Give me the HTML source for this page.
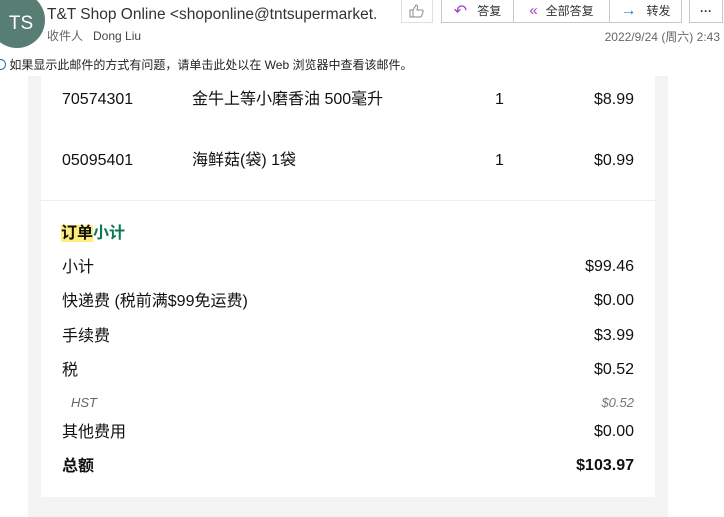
<!DOCTYPE html>
<html><head><meta charset="utf-8"><style>
body{margin:0;width:724px;height:517px;overflow:hidden;background:#fff;font-family:"Liberation Sans","Noto Sans CJK SC",sans-serif;position:relative}
.a{position:absolute;white-space:nowrap}
.btn{position:absolute;top:-2px;height:25px;border:1px solid #c8c8c8;box-sizing:border-box;font-size:12px;color:#333;display:flex;align-items:center;justify-content:center;background:#fff}
.t{font-size:16px;color:#111;line-height:20px}
.r{right:90px;text-align:right}
</style></head><body>
<div class="a" style="left:-11px;top:-8px;width:56px;height:56px;border-radius:50%;background:#587d73;color:#fff;font-size:19px;line-height:64px;text-align:center;padding-left:8px;box-sizing:border-box">TS</div>
<div class="a" style="left:47px;top:6px;font-size:15.5px;color:#333;width:331px;overflow:hidden">T&amp;T Shop Online &lt;shoponline@tntsupermarket.com&gt;</div>
<div class="a" style="left:47px;top:27px;font-size:12px;color:#666">收件人&nbsp;&nbsp;&nbsp;<span style="color:#444">Dong Liu</span></div>
<div class="a" style="left:-5px;top:56px;font-size:12px;color:#222"><span style="display:inline-block;width:9px;height:9px;border:1px solid #2b6cb0;border-radius:50%;vertical-align:-1px"></span> 如果显示此邮件的方式有问题，请单击此处以在 Web 浏览器中查看该邮件。</div>
<div class="btn" style="left:401px;width:32px;border-color:#e0e0e0"><svg width="18" height="16" viewBox="0 0 18 16"><path d="M2 7h3v7H2zM5 7l3-5c1 0 2 1 1.5 2.5L9 7h5c1 0 1.5 1 1 2l-1.5 4c-.3.7-.8 1-1.5 1H5" fill="none" stroke="#888"/></svg></div>
<div class="btn" style="left:441px;width:73px"><span style="color:#a23fc0;font-size:16px;margin-right:10px">↶</span>答复</div>
<div class="btn" style="left:513px;width:97px"><span style="color:#a23fc0;font-size:15px;margin-right:8px">«</span>全部答复</div>
<div class="btn" style="left:609px;width:73px"><span style="color:#1f7fd4;font-size:16px;margin-right:10px">→</span>转发</div>
<div class="btn" style="left:689px;width:34px;font-weight:bold">···</div>
<div class="a" style="right:4px;top:28px;font-size:12px;color:#666">2022/9/24 (周六) 2:43</div>
<div class="a" style="left:28px;top:76px;width:640px;height:441px;background:#f3f3f3"></div>
<div class="a" style="left:41px;top:76px;width:614px;height:421px;background:#fff"></div>
<div class="a" style="left:41px;top:200px;width:614px;height:1px;background:#eee"></div>
<div class="a t" style="left:62px;top:90px">70574301</div>
<div class="a t" style="left:192px;top:90px">金牛上等小磨香油 500毫升</div>
<div class="a t" style="left:495px;top:90px">1</div>
<div class="a t r" style="top:90px">$8.99</div>
<div class="a t" style="left:62px;top:151px">05095401</div>
<div class="a t" style="left:192px;top:151px">海鲜菇(袋) 1袋</div>
<div class="a t" style="left:495px;top:151px">1</div>
<div class="a t r" style="top:151px">$0.99</div>
<div class="a" style="left:61px;top:224px;font-size:16px;line-height:20px;font-weight:bold;color:#0c7a55"><span style="background:#ffec7a;color:#111">订单</span>小计</div>
<div class="a t" style="left:62px;top:258px">小计</div><div class="a t r" style="top:257px">$99.46</div>
<div class="a t" style="left:62px;top:292px">快递费 (税前满$99免运费)</div><div class="a t r" style="top:291px">$0.00</div>
<div class="a t" style="left:62px;top:327px">手续费</div><div class="a t r" style="top:326px">$3.99</div>
<div class="a t" style="left:62px;top:361px">税</div><div class="a t r" style="top:360px">$0.52</div>
<div class="a" style="left:71px;top:395px;font-size:13px;font-style:italic;color:#666">HST</div><div class="a r" style="top:395px;font-size:13px;font-style:italic;color:#777">$0.52</div>
<div class="a t" style="left:62px;top:423px">其他费用</div><div class="a t r" style="top:422px">$0.00</div>
<div class="a t" style="left:62px;top:457px;font-weight:bold">总额</div><div class="a t r" style="top:456px;font-weight:bold">$103.97</div>
</body></html>
